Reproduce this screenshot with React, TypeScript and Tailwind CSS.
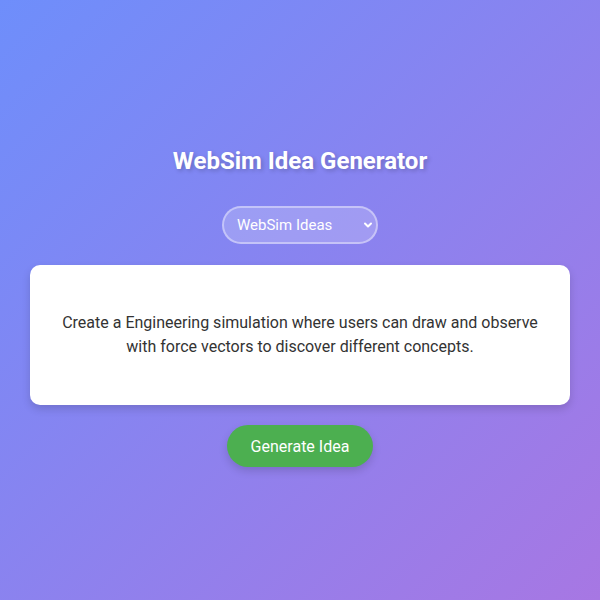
import React, { useState } from "react";

const ideas = [
  "Create a Engineering simulation where users can draw and observe with force vectors to discover different concepts.",
];

const App = () => {
  const [idea] = useState(ideas[0]);

  return (
    <div
      className="w-full h-[600px] flex flex-col items-center pt-[145px] bg-[linear-gradient(135deg,#6e8efb,#a777e3)] text-white"
      style={{ fontFamily: "Roboto, 'Noto Sans', sans-serif" }}
    >
      <h1 className="text-2xl leading-8 font-bold [text-shadow:2px_2px_4px_rgba(0,0,0,0.2)]">
        WebSim Idea Generator
      </h1>

      <div className="relative mt-[29px]">
        <select
          className="appearance-none w-[156px] h-[38px] pl-[13px] pr-8 rounded-full border-2 border-white/40 bg-white/20 text-[15px] text-white outline-none"
          defaultValue="websim"
        >
          <option value="websim" className="text-black">
            WebSim Ideas
          </option>
        </select>
        <svg
          className="absolute right-[5px] top-1/2 -translate-y-1/2 pointer-events-none"
          width="10"
          height="10"
          viewBox="0 0 10 10"
          fill="none"
          stroke="white"
          strokeWidth="2"
          strokeLinecap="round"
          strokeLinejoin="round"
        >
          <path d="M2 3.5 5 6.5 8 3.5" />
        </svg>
      </div>

      <div className="mt-[21px] w-[540px] h-[140px] rounded-[10px] bg-white shadow-[0_4px_8px_rgba(0,0,0,0.15)] flex items-center justify-center px-8">
        <p className="text-base leading-6 text-[#333] text-center">{idea}</p>
      </div>

      <button className="mt-5 w-[146px] h-[42px] pt-px rounded-full bg-[#4caf50] text-base text-white shadow-[0_4px_8px_rgba(0,0,0,0.15)]">
        Generate Idea
      </button>
    </div>
  );
};

export default App;
